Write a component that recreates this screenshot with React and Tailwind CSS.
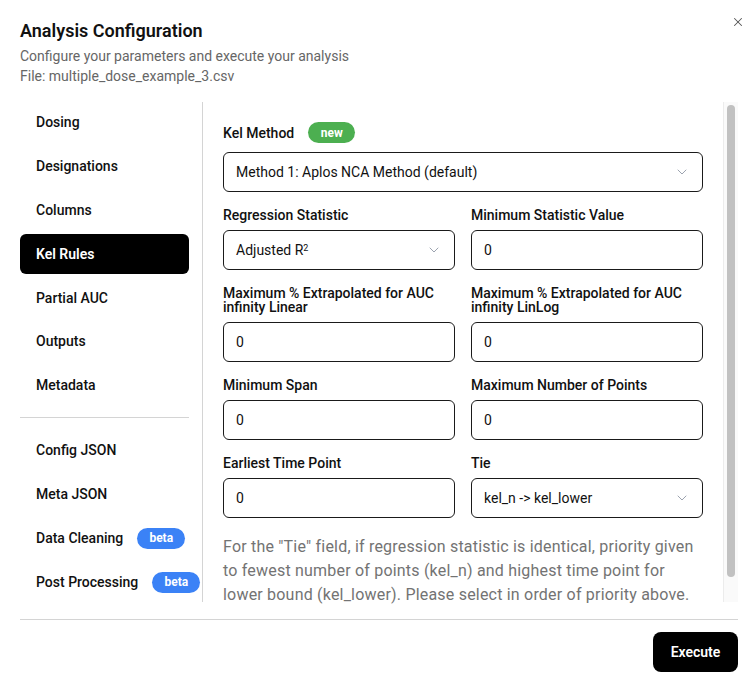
import { X, ChevronDown } from 'lucide-react';

// Itens do menu lateral
const primaryNav = ['Dosing', 'Designations', 'Columns', 'Kel Rules', 'Partial AUC', 'Outputs', 'Metadata'];
const secondaryNav = [
  { label: 'Config JSON' },
  { label: 'Meta JSON' },
  { label: 'Data Cleaning', badge: 'beta' },
  { label: 'Post Processing', badge: 'beta' },
];

const NavItem = ({ label, active, badge }) => (
  <div
    className={
      'flex items-center gap-[14px] h-10 px-4 rounded-md text-sm font-medium whitespace-nowrap ' +
      (active ? 'bg-black text-white font-semibold' : 'text-[#111]')
    }
  >
    <span>{label}</span>
    {badge && (
      <span className="shrink-0 flex items-center justify-center h-[21px] w-12 rounded-full bg-[#3b82f6] text-white text-xs font-bold">
        {badge}
      </span>
    )}
  </div>
);

const Label = ({ children }) => (
  <div className="text-sm font-medium leading-none mb-2 text-[#111]">{children}</div>
);

const TextInput = ({ value }) => (
  <div className="flex items-center h-10 px-3 border border-[#1a1a1a] rounded-md text-sm text-[#111]">
    {value}
  </div>
);

const SelectBox = ({ children }) => (
  <div className="flex items-center justify-between h-10 px-3 border border-[#1a1a1a] rounded-md text-sm text-[#111]">
    <span>{children}</span>
    <ChevronDown size={16} strokeWidth={1.5} className="text-[#9ca3af]" />
  </div>
);

const Field = ({ label, children }) => (
  <div className="flex flex-col justify-end">
    <Label>{label}</Label>
    {children}
  </div>
);

export default function App() {
  return (
    <div className="relative w-[753px] h-[693px] bg-white pl-5 pr-[15px] pt-[17px] font-['Roboto',sans-serif] text-black">
      {/* Botão de fechar */}
      <button className="absolute top-[15px] right-[8px] text-[#555]">
        <X size={14} strokeWidth={1.75} />
      </button>

      {/* Cabeçalho */}
      <h1 className="text-lg font-semibold leading-7 text-[#111]">Analysis Configuration</h1>
      <p className="mt-[1px] text-sm leading-5 text-[#666]">Configure your parameters and execute your analysis</p>
      <p className="text-sm leading-5 text-[#666]">File: multiple_dose_example_3.csv</p>

      {/* Corpo principal */}
      <div className="flex h-[500px] mt-4">
        <nav className="w-[169px] shrink-0 flex flex-col gap-1">
          {primaryNav.map((item) => (
            <NavItem key={item} label={item} active={item === 'Kel Rules'} />
          ))}
          <div className="h-px bg-[#d4d4d4] my-2" />
          {secondaryNav.map((item) => (
            <NavItem key={item.label} label={item.label} badge={item.badge} />
          ))}
        </nav>

        <div className="flex flex-1 min-w-0 ml-[13px] border-l border-[#d4d4d4]">
          <div className="flex-1 min-w-0 px-5 pt-5">
            <div className="flex items-center gap-[14px] mb-[9px]">
              <span className="text-sm font-medium text-[#111]">Kel Method</span>
              <span className="flex items-center justify-center h-[21px] w-[47px] rounded-full bg-[#4caf50] text-white text-xs font-bold">
                new
              </span>
            </div>
            <SelectBox>Method 1: Aplos NCA Method (default)</SelectBox>

            <div className="grid grid-cols-2 gap-x-4 gap-y-4 mt-4">
              <Field label="Regression Statistic">
                <SelectBox>
                  Adjusted R<sup className="text-[9px]">2</sup>
                </SelectBox>
              </Field>
              <Field label="Minimum Statistic Value">
                <TextInput value="0" />
              </Field>
              <Field label="Maximum % Extrapolated for AUC infinity Linear">
                <TextInput value="0" />
              </Field>
              <Field label="Maximum % Extrapolated for AUC infinity LinLog">
                <TextInput value="0" />
              </Field>
              <Field label="Minimum Span">
                <TextInput value="0" />
              </Field>
              <Field label="Maximum Number of Points">
                <TextInput value="0" />
              </Field>
              <Field label="Earliest Time Point">
                <TextInput value="0" />
              </Field>
              <Field label="Tie">
                <SelectBox>kel_n -&gt; kel_lower</SelectBox>
              </Field>
            </div>

            <p className="mt-[17px] text-base leading-6 tracking-[0.2px] text-[#737373]">
              For the "Tie" field, if regression statistic is identical, priority given to fewest number of points
              (kel_n) and highest time point for lower bound (kel_lower). Please select in order of priority above.
            </p>
          </div>

          {/* Barra de rolagem */}
          <div className="w-[15px] shrink-0 bg-[#fafafa] border-l border-[#ececec] flex justify-center pt-[3px]">
            <div className="w-2 h-[472px] rounded-full bg-[#c1c1c1]" />
          </div>
        </div>
      </div>

      {/* Rodapé */}
      <div className="h-px bg-[#d4d4d4] mt-[17px]" />
      <div className="flex justify-end pt-3">
        <button className="h-10 w-[85px] rounded-lg bg-black text-white text-sm font-semibold">Execute</button>
      </div>
    </div>
  );
}
